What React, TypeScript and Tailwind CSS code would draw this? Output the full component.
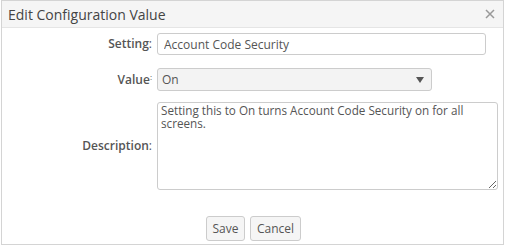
export default function App() {
  return (
    <div className="h-[247px] w-[506px] bg-white font-['Open_Sans',sans-serif] text-[12px] text-[#555]">
      <div className="ml-[1px] flex h-[245px] w-[503px] flex-col border border-[#d4d4d4] bg-white">
        <div className="flex h-[27px] items-center justify-between border-b border-[#e5e5e5] bg-[#f5f5f5] pl-[6px] pr-[8px]">
          <span className="text-[14px] text-[#444]">Edit Configuration Value</span>
          <svg width="10" height="10" viewBox="0 0 10 10" className="text-[#999]">
            <path d="M1 1 L9 9 M9 1 L1 9" stroke="currentColor" strokeWidth="1.5" />
          </svg>
        </div>
        <div className="flex flex-col pt-[5px]">
          <div className="flex items-center">
            <label className="w-[150px] text-right font-semibold text-[#555]">
              Setting<span className="font-normal">:</span>
            </label>
            <input
              readOnly
              value="Account Code Security"
              className="ml-[5px] h-[22px] w-[329px] rounded-[3px] border border-[#ccc] px-[6px] text-[12px] text-[#555] outline-none"
            />
          </div>
          <div className="mt-[13px] flex items-center">
            <label className="w-[150px] text-right font-semibold text-[#555]">
              Value<span className="font-normal align-top text-[8px]">:</span>
            </label>
            <div className="ml-[5px] flex h-[23px] w-[275px] items-center justify-between rounded-[3px] border border-[#ccc] bg-[#f3f3f3] pl-[4px] pr-[7px]">
              <span>On</span>
              <svg width="8" height="6" viewBox="0 0 8 6">
                <path d="M0 0 L8 0 L4 6 Z" fill="#555" />
              </svg>
            </div>
          </div>
          <div className="mt-[11px] flex items-center">
            <label className="w-[150px] text-right font-semibold text-[#555]">
              Description<span className="font-normal">:</span>
            </label>
            <textarea
              readOnly
              value="Setting this to On turns Account Code Security on for all screens."
              className="ml-[5px] h-[88px] w-[341px] rounded-[3px] border border-[#ccc] px-[3px] py-[1px] text-[11.7px] leading-[13px] text-[#555] outline-none"
            />
          </div>
        </div>
        <div className="mt-[26px] flex justify-center gap-[5px] pl-[2px]">
          <button className="h-[25px] w-[39px] rounded-[3px] border border-[#ccc] bg-[#f5f5f5] text-[12px] text-[#555]">
            Save
          </button>
          <button className="h-[25px] w-[51px] rounded-[3px] border border-[#ccc] bg-[#f5f5f5] text-[12px] text-[#555]">
            Cancel
          </button>
        </div>
      </div>
    </div>
  );
}
